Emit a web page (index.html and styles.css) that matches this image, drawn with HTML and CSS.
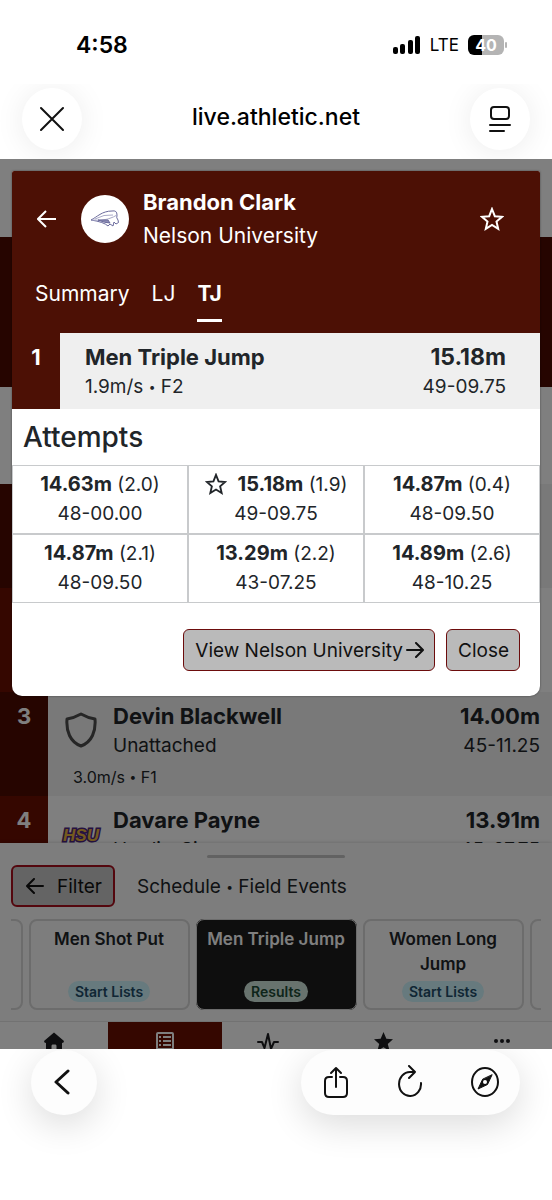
FILE: index.html
```html
<!DOCTYPE html>
<html lang="en">
<head>
  <meta charset="UTF-8" />
  <meta name="viewport" content="width=device-width, initial-scale=1.0" />
  <title>Men Triple Jump – live.athletic.net</title>
  <link rel="stylesheet" href="styles.css">
</head>
<body>
  <!-- Phone status bar -->
  <div class="status-bar">
    <time>4:58</time>
    <div class="status-right">
      <svg width="28" height="18" viewBox="0 0 28 18"><rect x="0" y="11" width="5" height="7" rx="2"/><rect x="7" y="8" width="5" height="10" rx="2"/><rect x="15" y="4" width="5" height="14" rx="2"/><rect x="22" y="0" width="5" height="18" rx="2"/></svg>
      <span class="network">LTE</span>
      <div class="battery"><span>40</span></div>
    </div>
  </div>

  <!-- Browser address bar -->
  <div class="address-bar">
    <button class="round-btn" aria-label="Close page">
      <svg width="24" height="26" viewBox="0 0 24 26"><path d="M1 2L23 24M23 2L1 24"/></svg>
    </button>
    <span class="address">live.athletic.net</span>
    <button class="round-btn" aria-label="Page menu">
      <svg width="22" height="28" viewBox="0 0 22 28"><rect x="2" y="2" width="18" height="12" rx="3"/><path d="M1 20H21M1 26H15"/></svg>
    </button>
  </div>

  <div class="web-view">
    <div class="site">
      <div class="results">
        <div class="site-header"></div>
        <div class="meet-banner"></div>
        <div class="event-title"></div>
        <div class="athlete"><span class="rank"></span></div>
        <div class="athlete"><span class="rank"></span></div>
        <div class="athlete">
          <span class="rank">3</span>
          <div class="team-logo">
            <svg width="32" height="36" viewBox="0 0 32 36"><path d="M16 2Q23 6 30 7C31 19 27 30 16 34C5 30 1 19 2 7Q9 6 16 2Z" fill="none" stroke="#4c4c4c" stroke-width="3" stroke-linejoin="round"/></svg>
          </div>
          <div class="athlete-info">
            <div class="line"><strong>Devin Blackwell</strong><strong>14.00m</strong></div>
            <div class="line sub"><span>Unattached</span><span>45-11.25</span></div>
            <div class="wind">3.0m/s <span class="dot">•</span> F1</div>
          </div>
        </div>
        <div class="athlete">
          <span class="rank">4</span>
          <div class="team-logo">
            <svg width="44" height="24" viewBox="0 0 44 24"><text x="22" y="19" text-anchor="middle" class="hsu">HSU</text></svg>
          </div>
          <div class="athlete-info">
            <div class="line"><strong>Davare Payne</strong><strong>13.91m</strong></div>
            <div class="line sub"><span>Hardin-Simmons</span><span>45-07.75</span></div>
          </div>
        </div>
      </div>

      <div class="schedule">
        <div class="handle"></div>
        <div class="schedule-head">
          <button class="btn filter-btn">
            <svg width="18" height="16" viewBox="0 0 18 16"><path d="M17 8H2M8 1L1 8L8 15"/></svg>
            Filter
          </button>
          <span>Schedule <span class="dot">•</span> Field Events</span>
        </div>
        <div class="cards">
          <a class="card" href="#"></a>
          <a class="card" href="#"><b>Men Shot Put</b><span class="badge">Start Lists</span></a>
          <a class="card active" href="#"><b>Men Triple Jump</b><span class="badge done">Results</span></a>
          <a class="card" href="#"><b>Women Long Jump</b><span class="badge">Start Lists</span></a>
          <a class="card" href="#"></a>
        </div>
      </div>

      <nav class="tab-bar">
        <a href="#" class="tab-home" aria-label="Home"><svg width="20" height="20" viewBox="0 0 20 20"><path d="M10 0.500L20 9Q20 11 18 11V20H12.500V14Q12.500 12.500 11.500 12.500H8.500Q7.500 12.500 7.500 14V20H2V11Q0 11 0 9Z"/></svg></a>
        <a href="#" class="tab-events active" aria-label="Events"><svg width="18" height="18" viewBox="0 0 18 18"><rect x="1" y="1" width="16" height="16" rx="1" fill="none" stroke="#fff" stroke-width="2"/><path d="M3 5H5M3 9H5M3 13H5M7 5H15M7 9H15M7 13H15" stroke="#fff" stroke-width="2"/></svg></a>
        <a href="#" class="tab-live" aria-label="Live"><svg width="22" height="20" viewBox="0 0 22 20"><path d="M1 10H5L7.500 16L11 2L14 17L17 10H21" fill="none" stroke="#1c1d20" stroke-width="2" stroke-linejoin="round" stroke-linecap="round"/></svg></a>
        <a href="#" class="tab-starred" aria-label="Starred"><svg width="19" height="19" viewBox="0 0 20 20"><path d="M10 0L13 7L20 7.500L14.500 12.500L16.500 20L10 16L3.500 20L5.500 12.500L0 7.500L7 7Z"/></svg></a>
        <a href="#" class="tab-more" aria-label="More"><svg width="16" height="20" viewBox="0 0 16 20"><circle cx="2" cy="9" r="2"/><circle cx="8" cy="9" r="2"/><circle cx="14" cy="9" r="2"/></svg></a>
      </nav>
    </div>

    <div class="backdrop">
      <section class="modal" role="dialog" aria-labelledby="athleteName">
        <header class="modal-header">
          <div class="profile">
            <button class="icon-btn" aria-label="Back"><svg width="20" height="18" viewBox="0 0 20 18"><path d="M19 9H2M9 1L1 9L9 17"/></svg></button>
            <div class="avatar">
              <svg width="30" height="18" viewBox="0 0 30 18" fill="none" stroke="#6a6a9c"><path d="M1 10C7 7 12 1 22 1Q27 0 27 5Q26 8 28 10Q30 13 26 14L24 12L23 16L20 14L18 16Q14 12 1 10Z"/><path d="M2 10Q12 11 18 9T27 5M5 9Q14 4 23 5" stroke="#a9a9c8"/><path d="M8 10Q15 13 20 13L18 10Z" fill="#8d8db5"/></svg>
            </div>
            <div class="names">
              <h2 id="athleteName">Brandon Clark</h2>
              <div>Nelson University</div>
            </div>
            <button class="icon-btn" aria-label="Star athlete"><svg width="24" height="24" viewBox="0 0 24 24"><path d="M12 2L14.800 9.200L22 9.800L16.500 14.500L18.200 21.800L12 18L5.800 21.800L7.500 14.500L2 9.800L9.200 9.200Z"/></svg></button>
          </div>
          <nav class="tabs">
            <a href="#">Summary</a>
            <a href="#">LJ</a>
            <a href="#" class="active">TJ</a>
          </nav>
        </header>

        <div class="best">
          <span class="rank">1</span>
          <div class="best-info">
            <div class="line"><strong>Men Triple Jump</strong><strong>15.18m</strong></div>
            <div class="line sub"><span>1.9m/s <span class="dot">•</span> F2</span><span>49-09.75</span></div>
          </div>
        </div>

        <h3>Attempts</h3>
        <table class="attempts">
          <tr>
            <td><b>14.63m</b> (2.0)<br>48-00.00</td>
            <td><svg class="pb" width="22" height="22" viewBox="0 0 24 24"><path d="M12 2L14.800 9.200L22 9.800L16.500 14.500L18.200 21.800L12 18L5.800 21.800L7.500 14.500L2 9.800L9.200 9.200Z"/></svg><b>15.18m</b> (1.9)<br>49-09.75</td>
            <td><b>14.87m</b> (0.4)<br>48-09.50</td>
          </tr>
          <tr>
            <td><b>14.87m</b> (2.1)<br>48-09.50</td>
            <td><b>13.29m</b> (2.2)<br>43-07.25</td>
            <td><b>14.89m</b> (2.6)<br>48-10.25</td>
          </tr>
        </table>

        <footer class="modal-footer">
          <button class="btn">View Nelson University<svg width="18" height="16" viewBox="0 0 18 16"><path d="M1 8H16M10 1L17 8L10 15"/></svg></button>
          <button class="btn">Close</button>
        </footer>
      </section>
    </div>
  </div>

  <!-- Browser toolbar -->
  <div class="toolbar">
    <button class="back-btn" aria-label="Go back"><svg width="16" height="26" viewBox="0 0 16 26"><path d="M14 2L2 13L14 24"/></svg></button>
    <div class="tools">
      <button aria-label="Share"><svg width="26" height="34" viewBox="0 0 26 34"><path d="M9 12H6Q2 12 2 16V28Q2 32 6 32H20Q24 32 24 28V16Q24 12 20 12H17M13 22V3M8 8L13 3L18 8"/></svg></button>
      <button aria-label="Reload"><svg width="26" height="34" viewBox="0 0 26 34"><path d="M24 18A11 12 0 1 1 13 7H18M12 1L18 7L12 13"/></svg></button>
      <button aria-label="Open in browser"><svg width="28" height="30" viewBox="0 0 28 30"><ellipse cx="14" cy="15" rx="13" ry="14"/><path d="M21 8L16.500 17.500L7 22L11.500 12.500Z" fill="#111" stroke-width="1"/><circle cx="14" cy="15" r="2" fill="#fff" stroke="none"/></svg></button>
    </div>
  </div>
</body>
</html>
```
FILE: styles.css
```css
* { box-sizing: border-box; }
body { margin: 0; height: 100vh; display: flex; flex-direction: column; font-family: Inter, 'Liberation Sans', sans-serif; font-size: 20px; color: #212529; background: #fff; overflow: hidden; }
a { color: inherit; text-decoration: none; }
button { font: inherit; color: inherit; cursor: pointer; }
svg { display: block; flex: none; }
h2, h3 { margin: 0; }

/* Phone and browser chrome */
.status-bar { display: flex; justify-content: space-between; align-items: center; padding: 30px 48px 24px 76px; color: #000; }
.status-bar time { font-size: 23px; line-height: 30px; font-weight: 600; }
.status-right { display: flex; align-items: center; }
.network { margin: 0 9px; font-size: 17px; }
.battery { position: relative; width: 36px; height: 20px; border-radius: 6px; background: linear-gradient(90deg, #000 40%, #b4b4b4 40%); color: #fff; font-size: 16px; line-height: 20px; font-weight: 700; text-align: center; }
.battery::after { content: ''; position: absolute; right: -3px; top: 7px; width: 2px; height: 6px; border-radius: 1px; background: #b4b4b4; }
.address-bar { display: flex; justify-content: space-between; align-items: center; padding: 4px 22px 9px; overflow: hidden; color: #000; }
.address { font-size: 23px; font-weight: 500; line-height: 30px; padding-bottom: 4px; }
.round-btn { display: flex; align-items: center; justify-content: center; width: 60px; height: 62px; padding: 0; border: none; border-radius: 50%; background: #fff; box-shadow: 0 2px 30px rgba(0,0,0,0.08); }
.round-btn svg, .toolbar svg { fill: none; stroke: #111; stroke-width: 2; stroke-linecap: round; stroke-linejoin: round; }
.toolbar { display: flex; justify-content: space-between; align-items: flex-start; padding: 1px 32px 85px 31px; overflow: hidden; }
.toolbar button { display: flex; align-items: center; justify-content: center; border: none; padding: 0; background: none; }
.toolbar .back-btn, .tools { height: 65px; border-radius: 33px; background: #fdfdfd; box-shadow: 0 10px 36px rgba(0,0,0,0.14); padding-bottom: 2px; }
.toolbar .back-btn { width: 66px; padding-right: 4px; }
.toolbar .back-btn svg { stroke-width: 3; }
.tools { display: flex; justify-content: space-between; align-items: center; width: 219px; padding: 0 21px 2px 22px; }

/* Site under the dialog */
.web-view { position: relative; flex: 1; min-height: 0; }
.site { height: 100%; display: flex; flex-direction: column; }
.results { flex: 1; min-height: 0; overflow: hidden; }
.site-header { height: 78px; }
.meet-banner { height: 150px; background: #4c0a00; }
.event-title { height: 97px; }
.athlete { display: flex; height: 104px; }
.athlete:nth-child(even) { background: #f2f2f2; }
.rank { flex: none; width: 48px; padding-top: 9px; text-align: center; font-size: 22px; line-height: 30px; font-weight: 700; color: #fff; background: #6a0e00; }
.athlete:nth-child(even) .rank { background: #4c0a00; }
.team-logo { display: flex; align-items: center; justify-content: center; width: 65px; height: 75px; }
.hsu { font: italic 700 17px 'Liberation Sans', sans-serif; fill: #e8b43c; stroke: #4b2380; stroke-width: 3px; paint-order: stroke; }
.athlete-info { flex: 1; padding: 9px 12px 0 0; }
.line { display: flex; justify-content: space-between; font-size: 22px; line-height: 30px; }
.line strong { font-weight: 700; }
.best .line strong:last-child { font-size: 23px; }
.line.sub { font-size: 19px; }
.wind { margin-left: -40px; font-size: 16px; line-height: 32px; }
.dot { font-size: 12px; vertical-align: 2px; line-height: 1; }

.schedule { padding: 12px 11px 11px; background: #fbfbfb; box-shadow: 0 0 4px rgba(0,0,0,0.2); }
.handle { width: 138px; height: 3px; margin: 0 auto 7px; border-radius: 2px; background: #c4c4c4; }
.schedule-head { display: flex; align-items: center; gap: 22px; font-size: 19px; }
.btn { display: flex; align-items: center; height: 42px; padding: 0 11px; border: 1px solid #6c0c0c; border-radius: 6px; background: #bababa; color: #111; font-size: 19px; }
.btn svg { fill: none; stroke: #111; stroke-width: 2; stroke-linecap: round; stroke-linejoin: round; }
.filter-btn { gap: 13px; padding: 0 11px 0 13px; border: 2px solid #a80f1c; background: #c8c8c8; }
.cards { display: flex; justify-content: center; gap: 6px; margin-top: 12px; overflow: hidden; }
.card { flex: none; display: flex; flex-direction: column; justify-content: space-between; align-items: center; width: 161px; height: 91px; padding: 6px 8px; border: 2px solid #d8d8d8; border-radius: 8px; text-align: center; font-size: 17px; line-height: 25px; }
.card b { font-weight: 600; }
.card.active { background: #1c1c1c; border-color: #1c1c1c; outline: 1px solid #d8d8d8; outline-offset: -1px; color: #fff; }
.badge { padding: 0 7px; border-radius: 11px; background: #cff4fc; color: #204c68; font-size: 14px; line-height: 21px; font-weight: 600; }
.badge.done { background: #d1e7dd; color: #1c4a34; }
.tab-bar { display: flex; height: 28px; overflow: hidden; background: #fff; border-top: 1px solid #e4e4e4; }
.tab-bar a { display: flex; justify-content: center; flex: 100; padding-top: 10px; }
.tab-bar svg { fill: #1c1d20; }
.tab-bar .active { background: #6a0e00; }
.tab-bar .tab-home { flex: 108; }
.tab-bar .tab-events { flex: 114; }
.tab-bar .tab-live { flex: 92; }
.tab-bar .tab-starred { flex: 138; }

/* Athlete dialog */
.backdrop { position: absolute; inset: 0; padding: 12px; background: rgba(0,0,0,0.5); }
.modal { border-radius: 2px 2px 10px 10px; overflow: hidden; background: #fff; box-shadow: 0 0 2px rgba(0,0,0,0.5); }
.modal-header { padding: 15px 23px 11px; background: #4c1005; color: #fff; }
.profile { display: flex; align-items: center; padding: 0 13px 0 2px; font-size: 21px; line-height: 33px; }
.icon-btn { display: flex; padding: 0; border: none; background: none; }
.icon-btn svg, .pb { fill: none; stroke: #fff; stroke-width: 2; }
.avatar { display: flex; align-items: center; justify-content: center; width: 48px; height: 48px; margin: 0 14px 0 24px; border-radius: 50%; background: #fff; }
.names { flex: 1; }
.names h2 { font-size: 22px; line-height: 33px; font-weight: 700; }
.tabs { display: flex; gap: 22px; margin-top: 27px; font-size: 21px; line-height: 30px; }
.tabs a { padding-bottom: 10px; border-bottom: 3px solid transparent; }
.tabs .active { font-weight: 700; border-color: #fff; }
.best { display: flex; background: #efefef; }
.best .rank { background: #4c1005; }
.best-info { flex: 1; padding: 9px 34px 7px 25px; }
.modal h3 { padding: 0 11px; font-size: 28px; line-height: 56px; font-weight: 500; }
.attempts { width: 100%; border-spacing: 0; table-layout: fixed; }
.attempts td { padding: 4px 0 5px; border: 1px solid #c8cacc; text-align: center; font-size: 19px; line-height: 29px; }
.attempts b { font-size: 20px; }
.pb { display: inline-block; margin-right: 11px; vertical-align: -4px; stroke: #212529; }
.modal-footer { display: flex; justify-content: flex-end; gap: 11px; padding: 26px 20px 25px; }
.modal-footer .btn { padding: 0 10px 0 11px; }
.modal-footer svg { margin-left: 3px; }
```
